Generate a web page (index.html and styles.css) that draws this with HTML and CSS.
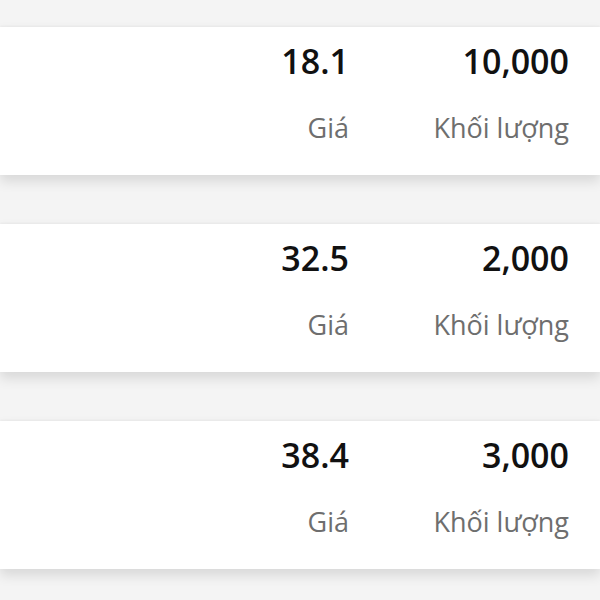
FILE: index.html
```html
<!DOCTYPE html>
<html lang="vi">
<head>
    <meta charset="UTF-8">
    <meta name="viewport" content="width=device-width, initial-scale=1.0">
    <title>Lệnh khớp</title>
    <link rel="stylesheet" href="styles.css">
</head>
<body>
    <div class="list">
        <div class="order-card">
            <div class="cell">
                <div class="value">18.1</div>
                <div class="label">Giá</div>
            </div>
            <div class="cell cell-volume">
                <div class="value">10,000</div>
                <div class="label">Khối lượng</div>
            </div>
        </div>

        <div class="order-card">
            <div class="cell">
                <div class="value">32.5</div>
                <div class="label">Giá</div>
            </div>
            <div class="cell cell-volume">
                <div class="value">2,000</div>
                <div class="label">Khối lượng</div>
            </div>
        </div>

        <div class="order-card">
            <div class="cell">
                <div class="value">38.4</div>
                <div class="label">Giá</div>
            </div>
            <div class="cell cell-volume">
                <div class="value">3,000</div>
                <div class="label">Khối lượng</div>
            </div>
        </div>
    </div>
</body>
</html>
```

FILE: styles.css
```css
body {
    margin: 0;
    padding: 0;
    font-family: "Open Sans", "Noto Sans", sans-serif;
    background-color: #f4f4f4;
    height: 100vh;
    overflow: hidden;
}

.list {
    display: flex;
    flex-direction: column;
    gap: 49px;
    padding-top: 27px;
}

.order-card {
    background-color: white;
    height: 148px;
    box-sizing: border-box;
    padding: 11px 31px 0 0;
    display: flex;
    justify-content: flex-end;
    box-shadow: 0 6px 12px rgba(0, 0, 0, 0.12), 0 -1px 2px rgba(0, 0, 0, 0.04);
}

.cell {
    text-align: right;
}

.cell-volume {
    width: 220px;
}

.value {
    font-size: 34px;
    font-weight: 600;
    color: #111;
}

.label {
    margin-top: 25px;
    font-size: 27px;
    color: #6e6e6e;
}
```
